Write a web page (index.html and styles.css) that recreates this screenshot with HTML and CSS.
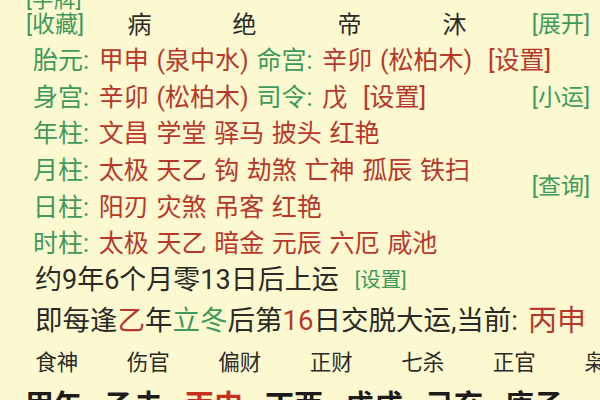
FILE: index.html
```html
<!DOCTYPE html>
<html lang="zh-CN">
<head>
<meta charset="utf-8">
<link rel="stylesheet" href="styles.css">
</head>
<body>
<div class="page">
  <div class="row row-top"><span class="g">[字牌]</span></div>
  <div class="row row-head">
    <span class="g head-link">[收藏]</span>
    <div class="states"><span>病</span><span>绝</span><span>帝</span><span>沐</span></div>
    <span class="g right">[展开]</span>
  </div>
  <div class="row info"><div class="line"><span class="g lb">胎元:</span> <span class="r">甲申 (泉中水)</span> <span class="g lb">命宫:</span> <span class="r">辛卯 (松柏木)</span> <span class="r set">[设置]</span></div></div>
  <div class="row info"><div class="line"><span class="g lb">身宫:</span> <span class="r">辛卯 (松柏木)</span> <span class="g lb">司令:</span> <span class="r">戊</span> <span class="r set">[设置]</span></div><span class="g right">[小运]</span></div>
  <div class="row info"><div class="line"><span class="g lb">年柱:</span> <span class="r">文昌 学堂 驿马 披头 红艳</span></div></div>
  <div class="row info"><div class="line"><span class="g lb">月柱:</span> <span class="r">太极 天乙 钩 劫煞 亡神 孤辰 铁扫</span></div><span class="g right query">[查询]</span></div>
  <div class="row info"><div class="line"><span class="g lb">日柱:</span> <span class="r">阳刃 灾煞 吊客 红艳</span></div></div>
  <div class="row info"><div class="line"><span class="g lb">时柱:</span> <span class="r">太极 天乙 暗金 元辰 六厄 咸池</span></div></div>
  <div class="row plain"><span>约9年6个月零13日后上运</span><span class="g small">[设置]</span></div>
  <div class="row plain row-dayun"><span>即每逢<span class="r">乙</span>年<span class="g">立冬</span>后第<span class="r">16</span>日交脱大运,当前:</span><span class="r big">丙申</span></div>
  <div class="row gods"><span>食神</span><span>伤官</span><span>偏财</span><span>正财</span><span>七杀</span><span>正官</span><span>枭神</span></div>
  <div class="row pillars"><span>甲午</span><span>乙未</span><span class="r">丙申</span><span>丁酉</span><span>戊戌</span><span>己亥</span><span>庚子</span></div>
</div>
</body>
</html>
```

FILE: styles.css
```css
html, body {
  margin: 0;
  padding: 0;
  background: #fcf9d1;
  overflow: hidden;
}
body {
  width: 600px;
  height: 400px;
  font-family: "Roboto", "Noto Sans CJK SC", sans-serif;
  color: #2b2a26;
}
.page {
  display: flex;
  flex-direction: column;
}
.row {
  display: flex;
  align-items: center;
  white-space: nowrap;
}
.g { color: #3e995b; }
.r { color: #b7382a; }
.row-top {
  height: 26px;
  margin-top: -16px;
  padding-left: 26px;
  font-size: 22px;
}
.row-head {
  height: 24px;
  margin-bottom: 6px;
  padding-left: 26px;
  padding-right: 10px;
  font-size: 23px;
}
.head-link { width: 61px; }
.states {
  display: grid;
  grid-template-columns: repeat(4, 105px);
  flex: 1;
  font-size: 24px;
}
.states span { text-align: center; }
.right { margin-left: auto; font-size: 23px; }
.info {
  height: 36.6px;
  padding-left: 33px;
  padding-right: 10px;
  font-size: 25px;
  word-spacing: 1.5px;
}
.info .lb { margin-right: 2px; }
.info .set { margin-left: 8px; }
.query { position: relative; top: 16px; }
.plain {
  height: 36.6px;
  padding-left: 35px;
  font-size: 27px;
}
.small { font-size: 20.5px; margin-left: 16px; }
.row-dayun {
  height: 44px;
  padding-right: 14px;
  font-size: 27.5px;
}
.row-dayun .big { margin-left: auto; font-size: 29px; }
.gods {
  display: grid;
  grid-template-columns: repeat(7, 91.5px);
  height: 40px;
  padding-left: 11px;
  font-size: 21.5px;
}
.gods span { text-align: center; }
.pillars {
  display: grid;
  grid-template-columns: repeat(7, 80px);
  height: 40px;
  padding-left: 14px;
  margin-top: 2px;
  font-size: 29px;
  font-weight: 700;
  color: #1d1c1a;
}
.pillars span { text-align: center; }
.pillars .r { color: #c8301e; }
```
